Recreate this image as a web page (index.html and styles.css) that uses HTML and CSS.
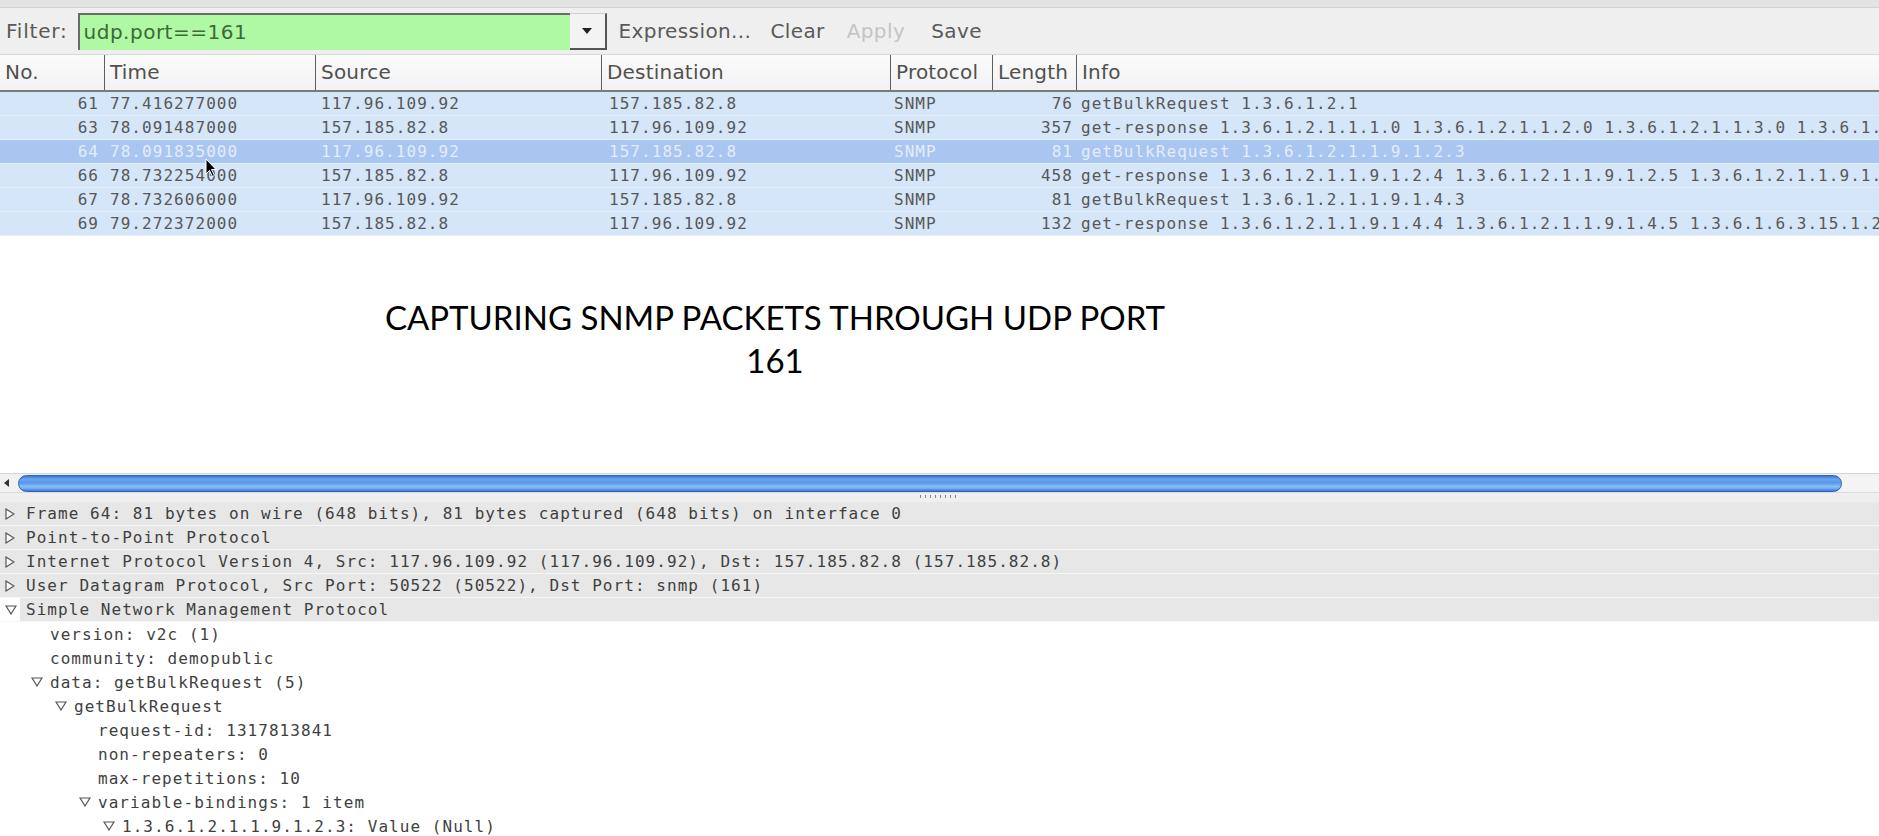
FILE: index.html
```html
<!DOCTYPE html>
<html>
<head>
<meta charset="utf-8">
<title>Wireshark SNMP capture</title>
<link rel="stylesheet" href="styles.css">
</head>
<body>
<div class="app">
  <div class="topstrip"></div>
  <div class="filterbar">
    <span class="flabel">Filter:</span>
    <div class="combo">
      <div class="finput">udp.port==161</div>
      <div class="fdrop"><svg width="12" height="8" viewBox="0 0 12 8"><polygon points="1,1 11,1 6,7" fill="#222"/></svg></div>
    </div>
    <span class="fbtn b-expr">Expression...</span>
    <span class="fbtn b-clear">Clear</span>
    <span class="fbtn b-apply">Apply</span>
    <span class="fbtn b-save">Save</span>
  </div>

  <div class="plist">
    <div class="phead">
      <div class="hc">No.</div>
      <div class="hc sep">Time</div>
      <div class="hc sep">Source</div>
      <div class="hc sep">Destination</div>
      <div class="hc sep">Protocol</div>
      <div class="hc sep">Length</div>
      <div class="hc sep">Info</div>
    </div>
    <div class="pbody">
      <div class="prow">
        <div class="c-no">61</div><div class="c-time">77.416277000</div><div class="c-src">117.96.109.92</div><div class="c-dst">157.185.82.8</div><div class="c-proto">SNMP</div><div class="c-len">76</div><div class="c-info">getBulkRequest 1.3.6.1.2.1</div>
      </div>
      <div class="prow">
        <div class="c-no">63</div><div class="c-time">78.091487000</div><div class="c-src">157.185.82.8</div><div class="c-dst">117.96.109.92</div><div class="c-proto">SNMP</div><div class="c-len">357</div><div class="c-info">get-response 1.3.6.1.2.1.1.1.0 1.3.6.1.2.1.1.2.0 1.3.6.1.2.1.1.3.0 1.3.6.1.2.1.1.4.0 1.3.6.1.2.1.1.5.0</div>
      </div>
      <div class="prow sel">
        <div class="c-no">64</div><div class="c-time">78.091835000</div><div class="c-src">117.96.109.92</div><div class="c-dst">157.185.82.8</div><div class="c-proto">SNMP</div><div class="c-len">81</div><div class="c-info">getBulkRequest 1.3.6.1.2.1.1.9.1.2.3</div>
      </div>
      <div class="prow">
        <div class="c-no">66</div><div class="c-time">78.732254000</div><div class="c-src">157.185.82.8</div><div class="c-dst">117.96.109.92</div><div class="c-proto">SNMP</div><div class="c-len">458</div><div class="c-info">get-response 1.3.6.1.2.1.1.9.1.2.4 1.3.6.1.2.1.1.9.1.2.5 1.3.6.1.2.1.1.9.1.2.6 1.3.6.1.2.1.1.9.1.2.7</div>
      </div>
      <div class="prow">
        <div class="c-no">67</div><div class="c-time">78.732606000</div><div class="c-src">117.96.109.92</div><div class="c-dst">157.185.82.8</div><div class="c-proto">SNMP</div><div class="c-len">81</div><div class="c-info">getBulkRequest 1.3.6.1.2.1.1.9.1.4.3</div>
      </div>
      <div class="prow">
        <div class="c-no">69</div><div class="c-time">79.272372000</div><div class="c-src">157.185.82.8</div><div class="c-dst">117.96.109.92</div><div class="c-proto">SNMP</div><div class="c-len">132</div><div class="c-info">get-response 1.3.6.1.2.1.1.9.1.4.4 1.3.6.1.2.1.1.9.1.4.5 1.3.6.1.6.3.15.1.2.1.0</div>
      </div>
      <div class="caption">CAPTURING SNMP PACKETS THROUGH UDP PORT<br>161</div>
    </div>
    <svg class="cursor" width="14" height="20" viewBox="0 0 14 20"><path d="M1 1 L1 16 L4.5 12.5 L7.5 18.5 L9.5 17.5 L6.5 11.5 L11 11.5 Z" fill="#000" stroke="#fff" stroke-width="1"/></svg>
  </div>

  <div class="hscroll">
    <div class="harrow"><svg width="6" height="8" viewBox="0 0 6 8"><polygon points="5,0 5,8 0,4" fill="#333"/></svg></div>
    <div class="hthumb"></div>
    <div class="htrough"></div>
  </div>
  <div class="splitter"><div class="grip"></div></div>

  <div class="details">
    <div class="trow top"><span class="exp"><svg width="10" height="12" viewBox="0 0 10 12"><polygon points="1,1 9,6 1,11" fill="#fafafa" stroke="#555" stroke-width="1.2"/></svg></span><span class="txt">Frame 64: 81 bytes on wire (648 bits), 81 bytes captured (648 bits) on interface 0</span></div>
    <div class="trow top"><span class="exp"><svg width="10" height="12" viewBox="0 0 10 12"><polygon points="1,1 9,6 1,11" fill="#fafafa" stroke="#555" stroke-width="1.2"/></svg></span><span class="txt">Point-to-Point Protocol</span></div>
    <div class="trow top"><span class="exp"><svg width="10" height="12" viewBox="0 0 10 12"><polygon points="1,1 9,6 1,11" fill="#fafafa" stroke="#555" stroke-width="1.2"/></svg></span><span class="txt">Internet Protocol Version 4, Src: 117.96.109.92 (117.96.109.92), Dst: 157.185.82.8 (157.185.82.8)</span></div>
    <div class="trow top"><span class="exp"><svg width="10" height="12" viewBox="0 0 10 12"><polygon points="1,1 9,6 1,11" fill="#fafafa" stroke="#555" stroke-width="1.2"/></svg></span><span class="txt">User Datagram Protocol, Src Port: 50522 (50522), Dst Port: snmp (161)</span></div>
    <div class="trow top open"><span class="exp"><svg width="12" height="10" viewBox="0 0 12 10"><polygon points="1,1 11,1 6,9" fill="#fafafa" stroke="#555" stroke-width="1.2"/></svg></span><span class="txt">Simple Network Management Protocol</span></div>
    <div class="trow lv1"><span class="exp"></span><span class="txt">version: v2c (1)</span></div>
    <div class="trow lv1"><span class="exp"></span><span class="txt">community: demopublic</span></div>
    <div class="trow lv1"><span class="exp"><svg width="12" height="10" viewBox="0 0 12 10"><polygon points="1,1 11,1 6,9" fill="#fafafa" stroke="#555" stroke-width="1.2"/></svg></span><span class="txt">data: getBulkRequest (5)</span></div>
    <div class="trow lv2"><span class="exp"><svg width="12" height="10" viewBox="0 0 12 10"><polygon points="1,1 11,1 6,9" fill="#fafafa" stroke="#555" stroke-width="1.2"/></svg></span><span class="txt">getBulkRequest</span></div>
    <div class="trow lv3"><span class="exp"></span><span class="txt">request-id: 1317813841</span></div>
    <div class="trow lv3"><span class="exp"></span><span class="txt">non-repeaters: 0</span></div>
    <div class="trow lv3"><span class="exp"></span><span class="txt">max-repetitions: 10</span></div>
    <div class="trow lv3"><span class="exp"><svg width="12" height="10" viewBox="0 0 12 10"><polygon points="1,1 11,1 6,9" fill="#fafafa" stroke="#555" stroke-width="1.2"/></svg></span><span class="txt">variable-bindings: 1 item</span></div>
    <div class="trow lv4"><span class="exp"><svg width="12" height="10" viewBox="0 0 12 10"><polygon points="1,1 11,1 6,9" fill="#fafafa" stroke="#555" stroke-width="1.2"/></svg></span><span class="txt">1.3.6.1.2.1.1.9.1.2.3: Value (Null)</span></div>
  </div>
</div>
</body>
</html>
```

FILE: styles.css
```css
html, body {
  margin: 0;
  padding: 0;
}
body {
  width: 1879px;
  height: 836px;
  overflow: hidden;
  background: #ffffff;
  font-family: "DejaVu Sans", sans-serif;
}
.app {
  display: flex;
  flex-direction: column;
  height: 838px;
}

/* top strip */
.topstrip {
  height: 7px;
  background: #e3e3e3;
  border-bottom: 1px solid #d0d0d0;
  flex: none;
}

/* filter bar */
.filterbar {
  flex: none;
  height: 46px;
  box-sizing: border-box;
  padding-top: 5px;
  background: #efefef;
  display: flex;
  align-items: flex-start;
  font-size: 20px;
  color: #5a5a5a;
}
.flabel {
  margin-left: 6px;
  line-height: 37px;
  letter-spacing: 0.8px;
}
.combo {
  display: flex;
  margin-left: 10px;
  height: 37px;
}
.finput {
  width: 492px;
  height: 37px;
  box-sizing: border-box;
  background: #aff8a4;
  border-top: 2px solid #6a6a6a;
  border-left: 2px solid #6a6a6a;
  padding-left: 4px;
  line-height: 34px;
  color: #3b6a34;
  letter-spacing: 0.5px;
}
.fdrop {
  width: 37px;
  height: 37px;
  box-sizing: border-box;
  background: #f3f3f3;
  border-right: 2px solid #555;
  border-bottom: 2px solid #555;
  border-top: 1px solid #cfcfcf;
  display: flex;
  align-items: center;
  justify-content: center;
}
.fbtn {
  line-height: 37px;
  letter-spacing: 0.4px;
  color: #595959;
}
.b-expr { margin-left: 12px; }
.b-clear { margin-left: 19px; }
.b-apply { margin-left: 22px; color: #c4c4c4; }
.b-save { margin-left: 26px; }

/* packet list */
.plist {
  position: relative;
  flex: none;
  height: 419px;
  display: flex;
  flex-direction: column;
  background: #ffffff;
}
.phead {
  flex: none;
  height: 38px;
  box-sizing: border-box;
  display: grid;
  grid-template-columns: 104px 211px 286px 289px 102px 84px 1fr;
  background: linear-gradient(#fbfbfb, #f2f2f2);
  border-top: 1px solid #d8d8d8;
  border-bottom: 2px solid #7b7b7b;
  font-size: 20px;
  color: #505050;
}
.hc {
  padding-left: 5px;
  line-height: 35px;
  white-space: nowrap;
  letter-spacing: 0.2px;
}
.hc.sep {
  border-left: 1px solid #5e5e5e;
}
.pbody {
  flex: 1;
  display: flex;
  flex-direction: column;
}
.prow {
  flex: none;
  height: 24px;
  box-sizing: border-box;
  display: grid;
  grid-template-columns: 104px 211px 286px 289px 102px 84px 1fr;
  background: #d5e6f8;
  border-bottom: 1px solid #e3edf9;
  font-family: "DejaVu Sans Mono", monospace;
  font-size: 16px;
  letter-spacing: 1.05px;
  line-height: 23px;
  color: #585858;
  white-space: nowrap;
  overflow: hidden;
}
.prow.sel {
  background: #a8c6ef;
  color: #e4edf9;
}
.prow > div {
  overflow: hidden;
}
.c-no {
  text-align: right;
  padding-right: 5px;
}
.c-time { padding-left: 6px; }
.c-src { padding-left: 6px; }
.c-dst { padding-left: 8px; }
.c-proto { padding-left: 4px; }
.c-len {
  text-align: right;
  padding-right: 3px;
}
.c-info { padding-left: 5px; }

.caption {
  margin-top: 60px;
  margin-left: 345px;
  width: 860px;
  text-align: center;
  font-family: Lato, "Open Sans", sans-serif;
  font-size: 33px;
  line-height: 43px;
  color: #000000;
}
.cursor {
  position: absolute;
  left: 205px;
  top: 104px;
}

/* horizontal scrollbar */
.hscroll {
  flex: none;
  height: 19px;
  display: flex;
  align-items: center;
  background: #f1f1f1;
  border-top: 1px solid #d6d6d6;
  box-sizing: border-box;
}
.harrow {
  width: 18px;
  display: flex;
  align-items: center;
  padding-left: 4px;
  box-sizing: border-box;
}
.hthumb {
  width: 1824px;
  height: 17px;
  box-sizing: border-box;
  border: 1px solid #2d62bf;
  border-radius: 9px;
  background: linear-gradient(#3f77d2 0%, #6aa5ee 22%, #5995e6 45%, #86bdf6 70%, #6ea8ee 85%, #3d74cf 100%);
}
.htrough {
  flex: 1;
  height: 15px;
  background: #f4f4f4;
}

.splitter {
  flex: none;
  height: 10px;
  background: #efefef;
  border-top: 1px solid #dcdcdc;
  box-sizing: border-box;
  display: flex;
  justify-content: center;
}
.grip {
  margin-left: 1px;
  margin-top: 2px;
  width: 40px;
  height: 3px;
  background: repeating-linear-gradient(90deg, #888 0 1px, transparent 1px 5px);
}

/* details tree */
.details {
  flex: 1;
  background: #ffffff;
  font-family: "DejaVu Sans Mono", monospace;
  font-size: 16px;
  letter-spacing: 1.05px;
  color: #3f3f3f;
}
.trow {
  height: 24px;
  box-sizing: border-box;
  display: flex;
  align-items: center;
  white-space: nowrap;
}
.trow.top {
  background: #e7e7e7;
  border-bottom: 1px solid #f6f6f6;
}
.trow.top.open {
  background: linear-gradient(90deg, #ffffff 0 20px, #e7e7e7 20px);
}
.exp {
  width: 26px;
  flex: none;
  display: flex;
  align-items: center;
  padding-left: 5px;
  box-sizing: border-box;
}
.lv1 { padding-left: 24px; }
.lv2 { padding-left: 48px; }
.lv3 { padding-left: 72px; }
.lv4 { padding-left: 96px; }
.lv1 .exp, .lv2 .exp, .lv3 .exp, .lv4 .exp { padding-left: 7px; }
```
